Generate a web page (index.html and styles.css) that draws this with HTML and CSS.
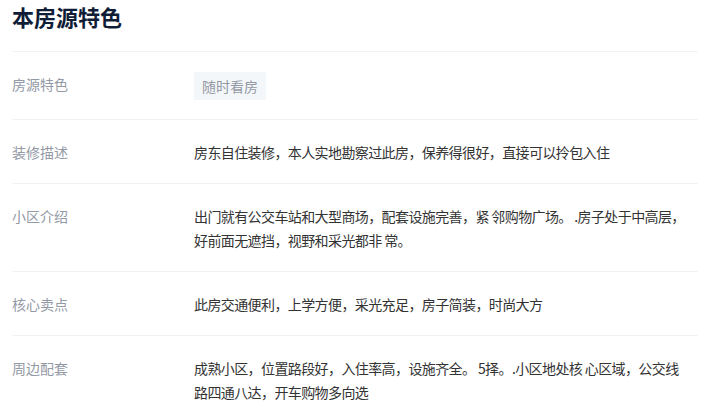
FILE: index.html
```html
<!DOCTYPE html>
<html>
<head>
<meta charset="utf-8">
<title>本房源特色</title>
<link rel="stylesheet" href="styles.css">
</head>
<body>

<div class="feature">
<h2 class="feature-title">本房源特色</h2>
<ul class="feature-list">
    <li class="feature-row">
        <div class="feature-label">房源特色</div>
        <div class="feature-value"><span class="tag">随时看房</span></div>
    </li>
    <li class="feature-row">
        <div class="feature-label">装修描述</div>
        <div class="feature-value">房东自住装修，本人实地勘察过此房，保养得很好，直接可以拎包入住</div>
    </li>
    <li class="feature-row">
        <div class="feature-label">小区介绍</div>
        <div class="feature-value">出门就有公交车站和大型商场，配套设施完善，紧 邻购物广场。 .房子处于中高层，好前面无遮挡，视野和采光都非 常。</div>
    </li>
    <li class="feature-row">
        <div class="feature-label">核心卖点</div>
        <div class="feature-value">此房交通便利，上学方便，采光充足，房子简装，时尚大方</div>
    </li>
    <li class="feature-row">
        <div class="feature-label">周边配套</div>
        <div class="feature-value">成熟小区，位置路段好，入住率高，设施齐全。 5择。.小区地处核 心区域，公交线路四通八达，开车购物多向选</div>
    </li>
</ul>
</div>

</body>
</html>
```

FILE: styles.css
```css
body {margin:0; background:#fff; font:14px "Noto Sans CJK SC", "Noto Sans", sans-serif; color:#333;}
/* house feature block */
.feature {padding:0 22px 0 12px;}
.feature-title {margin:0; height:51px; line-height:32px; font-size:22px; font-weight:bold; color:#101d37; border-bottom:1px solid #f1f2f3;}
.feature-list {list-style:none; margin:0; padding:0;}
.feature-row {display:flex; padding:20px 0 19px; border-bottom:1px solid #f1f2f3;}
.feature-label {flex:0 0 182px; line-height:24px; color:#9399a5;}
.feature-value {flex:1; padding-right:10px; line-height:24px; color:#333; letter-spacing:-0.6px;}
.tag {display:inline-block; height:28px; line-height:28px; padding:0 8px; background:#f4f7f9; color:#9399a5; letter-spacing:0;}
```
